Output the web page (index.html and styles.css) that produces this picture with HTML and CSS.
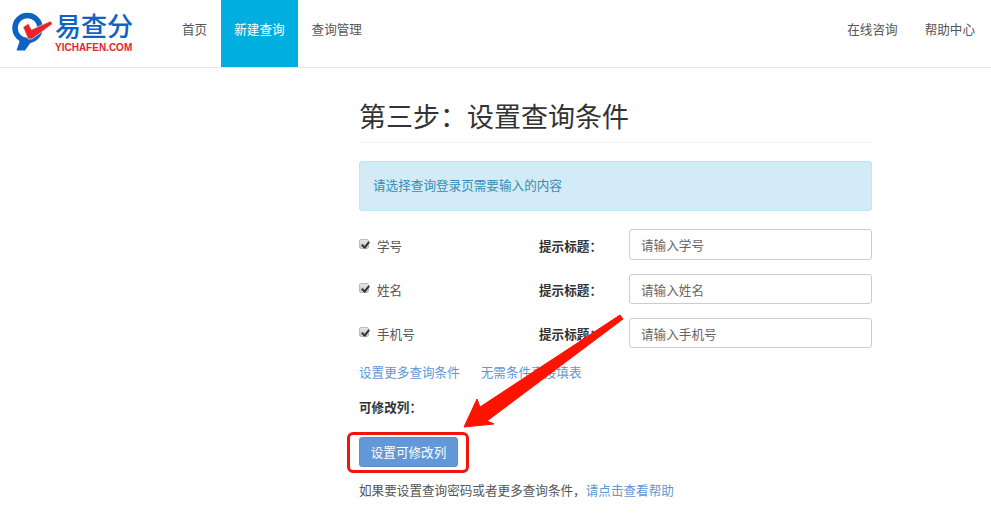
FILE: index.html
```html
<!DOCTYPE html>
<html lang="zh">
<head>
<meta charset="utf-8">
<title>易查分</title>
<link rel="stylesheet" href="styles.css">
</head>
<body>
<header class="navbar">
  <a class="logo">
    <svg class="logo-mark" width="43" height="41" viewBox="11 11 43 41">
      <circle cx="27.500" cy="28" r="12.500" fill="none" stroke="#0e62c4" stroke-width="5.500"/>
      <path d="M20 40 L16.500 50.500 L25 50.500 L31 42Z" fill="#0e62c4"/>
      <path d="M23 27 L28.500 23.500 L31.500 29.500 L50.500 21 L52.500 24 L32 39 L28 39Z" fill="#e8232d" stroke="#fff" stroke-width="0.600"/>
    </svg>
    <span class="logo-text">
      <span class="logo-cn">易查分</span>
      <span class="logo-en">YICHAFEN.COM</span>
    </span>
  </a>
  <nav class="nav">
    <a class="nav-item">首页</a>
    <a class="nav-item active">新建查询</a>
    <a class="nav-item">查询管理</a>
  </nav>
  <nav class="nav nav-right">
    <a class="nav-item">在线咨询</a>
    <a class="nav-item">帮助中心</a>
  </nav>
</header>

<main class="content">
  <h1 class="title">第三步：设置查询条件</h1>
  <div class="alert">请选择查询登录页需要输入的内容</div>

  <div class="rows">
    <div class="row r1">
      <label class="check"><input type="checkbox" checked><span>学号</span></label>
      <b class="hint">提示标题：</b>
      <input class="field" type="text" placeholder="请输入学号">
    </div>
    <div class="row">
      <label class="check"><input type="checkbox" checked><span>姓名</span></label>
      <b class="hint">提示标题：</b>
      <input class="field" type="text" placeholder="请输入姓名">
    </div>
    <div class="row">
      <label class="check"><input type="checkbox" checked><span>手机号</span></label>
      <b class="hint">提示标题：</b>
      <input class="field" type="text" placeholder="请输入手机号">
    </div>
  </div>

  <div class="links">
    <a class="link">设置更多查询条件</a>
    <a class="link">无需条件直接填表</a>
  </div>

  <p class="editable">可修改列：</p>

  <div class="btn-wrap">
    <button class="btn" type="button">设置可修改列</button>
  </div>

  <p class="foot">如果要设置查询密码或者更多查询条件，<a class="link">请点击查看帮助</a></p>
</main>

<svg class="arrow" width="170" height="125" viewBox="0 0 170 125">
  <path d="M159 3 L162 7 L26 109 L33 112 L3 115 L16 87 L19 95Z" fill="#fe1200" stroke="#fe1200" stroke-width="1" stroke-linejoin="round"/>
</svg>
</body>
</html>
```

FILE: styles.css
```css
* { box-sizing: border-box; }
html, body { margin: 0; padding: 0; }
body {
  background: #fff;
  color: #555;
  font: 12.600px/20px "Noto Sans CJK SC", "Liberation Sans", sans-serif;
  height: 519px;
  overflow: hidden;
  position: relative;
}
a { text-decoration: none; }

.navbar {
  display: flex;
  height: 68px;
  border-bottom: 1px solid #e7e7e7;
  background: #fff;
}
.logo {
  display: flex;
  width: 168.500px;
  padding: 11px 0 0 11px;
  align-items: flex-start;
}
.logo-mark { flex: none; }
.logo-text {
  display: flex;
  flex-direction: column;
  margin: 2px 0 0 1px;
}
.logo-cn {
  font: 500 26px/29px "Liberation Sans", "Noto Sans CJK SC", sans-serif;
  color: #0e62c4;
  white-space: nowrap;
}
.logo-en {
  font: 700 10px/12px "Liberation Sans", sans-serif;
  color: #e8232d;
  white-space: nowrap;
}
.nav { display: flex; }
.nav-right { margin-left: auto; margin-right: 2.500px; }
.nav-item {
  display: flex;
  align-items: center;
  height: 67px;
  padding: 0 13.500px 9px;
  color: #555;
}
.nav-item.active {
  background: #00aee0;
  color: #fff;
}

.content {
  width: 513px;
  margin-left: 359px;
}
.title {
  margin: 29px 0 0;
  height: 46px;
  border-bottom: 1px solid #eee;
  font-size: 27px;
  font-weight: 400;
  line-height: 37px;
  color: #333;
}
.alert {
  margin-top: 18px;
  height: 50px;
  padding: 13px 13px;
  border: 1px solid #bce8f1;
  border-radius: 3px;
  background: #d3eaf7;
  color: #318fb3;
}
.rows { margin-top: 18px; }
.row {
  display: grid;
  grid-template-columns: 180px 90px 1fr;
  align-items: center;
  height: 30px;
  margin-top: 14px;
}
.r1 { height: 31px; margin-top: 0; }
.check { display: flex; align-items: center; padding-top: 1px; }
.check input {
  appearance: none;
  position: relative;
  flex: none;
  margin: 0 8px 3px 0;
  width: 10px;
  height: 10px;
  border: 1px solid #bbb;
  border-radius: 2px;
  background: linear-gradient(#e6e6e6, #c4c4c4);
}
.check input::after {
  content: "";
  position: absolute;
  left: 2.500px;
  top: 0;
  width: 3px;
  height: 6px;
  border: solid #333;
  border-width: 0 2px 2px 0;
  transform: rotate(40deg);
}
.hint { font-weight: 700; color: #333; padding-top: 1px; }
.r1 .check, .r1 .hint { padding-top: 3px; }
.r1 .check input { margin-bottom: 5px; }
.field {
  width: 243px;
  height: 100%;
  padding: 0 11px;
  border: 1px solid #ccc;
  border-radius: 3px;
  font: inherit;
  color: #555;
}
.field::placeholder { color: #666; opacity: 1; }
.links {
  display: flex;
  gap: 21px;
  margin-top: 14px;
}
.link { color: #5f97d6; }
.editable {
  margin: 15px 0 0;
  font-weight: 700;
  color: #333;
}
.btn-wrap {
  width: 122px;
  height: 41px;
  margin: 15px 0 0 -12px;
  padding: 2px 0 0 9px;
  border: 3px solid #f0140a;
  border-radius: 6px;
}
.btn {
  display: block;
  width: 99px;
  height: 30px;
  padding: 0;
  border: 1px solid #5a8fcd;
  border-radius: 3px;
  background: #6298d8;
  color: #fff;
  font: inherit;
}
.foot {
  margin: 7px 0 0;
  color: #555;
}

.arrow {
  position: absolute;
  left: 461px;
  top: 312px;
}
```
